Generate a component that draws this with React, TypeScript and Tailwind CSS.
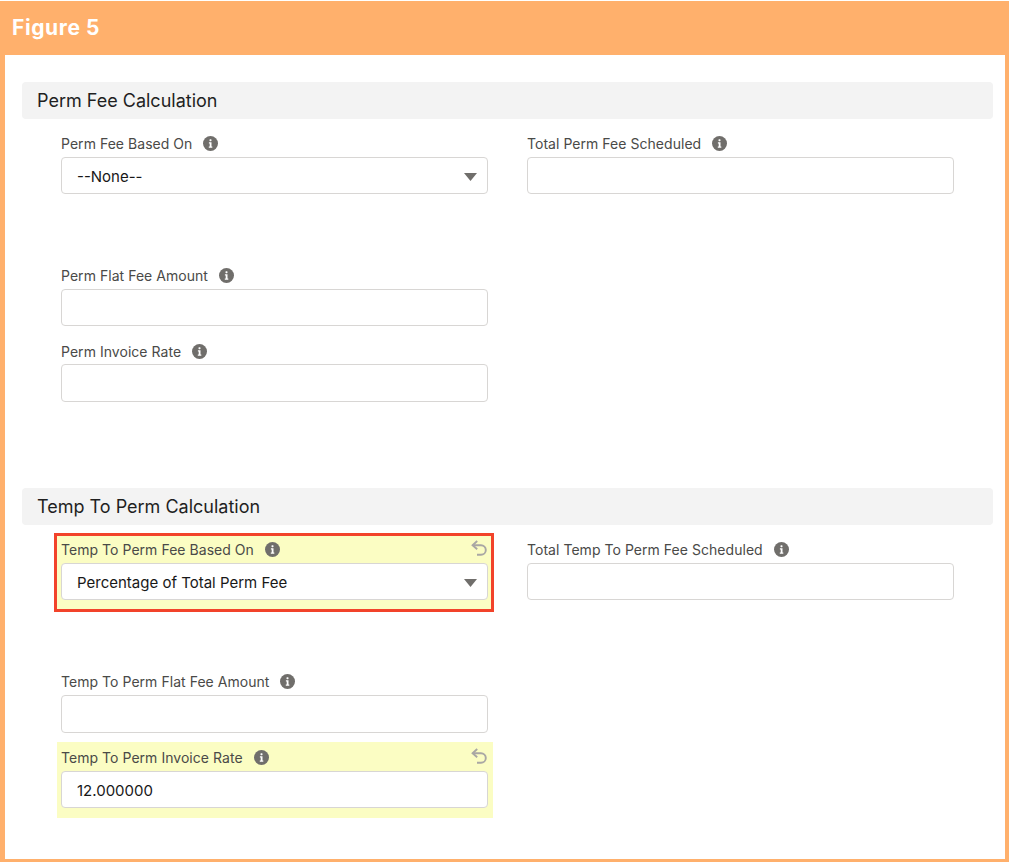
import React from "react";

function InfoIcon() {
  return (
    <svg width="15" height="15" viewBox="0 0 15 15" className="shrink-0" aria-hidden="true">
      <circle cx="7.5" cy="7.5" r="7.5" fill="#706e6b" />
      <rect x="6.5" y="3.2" width="2" height="2" rx="0.6" fill="#fff" />
      <path d="M5.9 6.3h2.6v4.3h0.8v1.1H5.8v-1.1h0.9V7.4h-0.8z" fill="#fff" />
    </svg>
  );
}

function UndoIcon() {
  return (
    <svg width="16" height="17" viewBox="0 0 16 17" fill="none" stroke="#a9a7a4" strokeWidth="1.9" className="absolute right-[1px] top-[1px]" aria-hidden="true">
      <path d="M6.2 1 1.6 5.2l4.6 4" />
      <path d="M1.8 5.2h8.2a4.6 4.6 0 0 1 0 9.6H6" />
    </svg>
  );
}

function Caret() {
  return (
    <svg width="13" height="8" viewBox="0 0 13 8" className="absolute right-[10px] top-[15px]" aria-hidden="true">
      <path d="M0 0h13L6.5 8z" fill="#706e6b" />
    </svg>
  );
}

function Field({
  label,
  value,
  select,
  h = "h-[37px]",
  gap = "mt-1",
}: {
  label: string;
  value?: string;
  select?: boolean;
  h?: string;
  gap?: string;
}) {
  return (
    <div className="relative">
      <div className="flex h-5 items-center text-[14px] leading-5 tracking-[0.04px] text-[#4a4a48]">
        <span className="relative top-px">{label}</span>
        <span className="ml-[11px]">
          <InfoIcon />
        </span>
      </div>
      <div className={`relative ${gap} ${h} flex items-center rounded-[4px] border border-[#d8d6d4] bg-white pl-[15px] text-[15px] text-[#181818]`}>
        <span className="relative top-[2px]">{value}</span>
        {select && <Caret />}
      </div>
    </div>
  );
}

function SectionHeader({ title }: { title: string }) {
  return (
    <div className="ml-[17px] mr-[12px] flex h-[37px] items-center rounded-[4px] bg-[#f3f3f3] pl-[15px] text-[18px] text-[#1f1f1f]">
      {title}
    </div>
  );
}

export default function App() {
  return (
    <div className="h-[862px] w-[1009px] bg-white pt-px font-['Inter','Liberation_Sans',sans-serif]">
      <div className="flex h-[861px] flex-col bg-[#ffb06c] pb-[3px] pl-[5px] pr-1">
        <div className="flex h-[54px] shrink-0 items-center pl-[7px] text-[21px] font-bold tracking-[0.6px] text-white">
          Figure 5
        </div>
        <div className="flex-1 bg-white pt-[27px]">
          <SectionHeader title="Perm Fee Calculation" />

          <div className="mt-[14px] flex gap-[39px] pl-[56px]">
            <div className="w-[427px]">
              <Field label="Perm Fee Based On" value="--None--" select />
            </div>
            <div className="w-[427px]">
              <Field label="Total Perm Fee Scheduled" />
            </div>
          </div>

          <div className="ml-[56px] mt-[71px] w-[427px]">
            <Field label="Perm Flat Fee Amount" />
          </div>
          <div className="ml-[56px] mt-[15px] w-[427px]">
            <Field label="Perm Invoice Rate" h="h-[38px]" gap="mt-[3px]" />
          </div>

          <div className="mt-[86px]">
            <SectionHeader title="Temp To Perm Calculation" />
          </div>

          <div className="mt-[8px] flex pl-[49px]">
            <div className="w-[440px] border-[3px] border-[#f2432a] bg-[#fbfdc3] pb-[9px] pl-1 pr-[3px] pt-[3px]">
              <div className="relative">
                <Field label="Temp To Perm Fee Based On" value="Percentage of Total Perm Fee" select />
                <UndoIcon />
              </div>
            </div>
            <div className="ml-[33px] mt-[6px] w-[427px]">
              <Field label="Total Temp To Perm Fee Scheduled" />
            </div>
          </div>

          <div className="ml-[56px] mt-[59px] w-[427px]">
            <Field label="Temp To Perm Flat Fee Amount" h="h-[38px]" />
          </div>

          <div className="ml-[52px] mt-[9px] w-[436px] bg-[#fbfdc3] pb-[10px] pl-1 pr-[5px] pt-[5px]">
            <div className="relative">
              <Field label="Temp To Perm Invoice Rate" value="12.000000" />
              <UndoIcon />
            </div>
          </div>
        </div>
      </div>
    </div>
  );
}
